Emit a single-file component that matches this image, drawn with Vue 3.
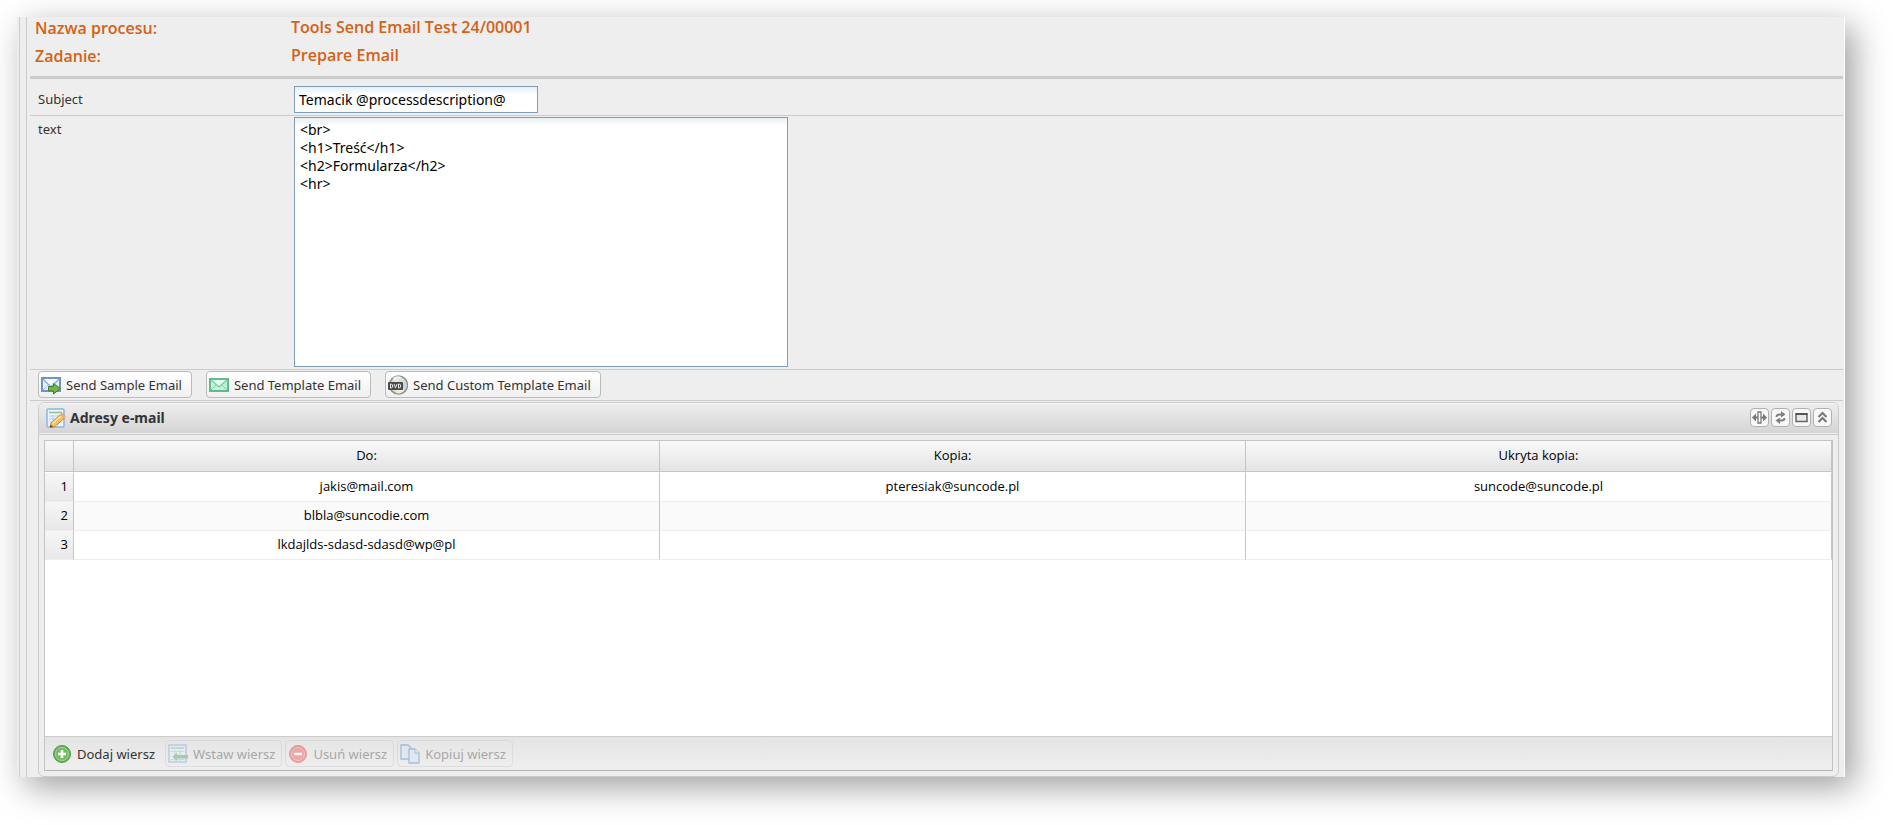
<script setup>
import { ref } from 'vue'

const subject = ref('Temacik @processdescription@')
const body = ref('<br>\n<h1>Treść</h1>\n<h2>Formularza</h2>\n<hr>')

const columns = ['Do:', 'Kopia:', 'Ukryta kopia:']
const rows = [
  ['jakis@mail.com', 'pteresiak@suncode.pl', 'suncode@suncode.pl'],
  ['blbla@suncodie.com', '', ''],
  ['lkdajlds-sdasd-sdasd@wp@pl', '', ''],
]
</script>

<template>
  <div class="page">
    <main class="window">
      <div class="content">
        <dl class="process">
          <dt>Nazwa procesu:</dt>
          <dd>Tools Send Email Test 24/00001</dd>
          <dt>Zadanie:</dt>
          <dd>Prepare Email</dd>
        </dl>

        <div class="form-row">
          <label for="subject">Subject</label>
          <input id="subject" v-model="subject" type="text" />
        </div>
        <div class="form-row">
          <label for="body">text</label>
          <textarea id="body" v-model="body" spellcheck="false"></textarea>
        </div>

        <div class="actions">
          <button type="button" class="btn">
            <svg viewBox="0 0 20 20" aria-hidden="true">
              <rect x="1" y="3" width="18" height="13" fill="#e3effb" stroke="#6d93cd" stroke-width="2" />
              <path d="M2 15l6-6M18 15l-6-6" stroke="#a9c5e8" />
              <path d="M2 4l8 8 8-8" fill="#f8fcff" stroke="#88abd9" stroke-width="1.3" />
              <path d="M7.500 11.500h5v-3l7 5-7 5.500v-3h-5z" fill="#74b44c" stroke="#39812d" />
            </svg>
            Send Sample Email
          </button>
          <button type="button" class="btn">
            <svg viewBox="0 0 20 20" aria-hidden="true">
              <rect x="1" y="4" width="18" height="12" fill="#c3f1da" stroke="#5dbb8e" stroke-width="2" />
              <path d="M2 15l6-6M18 15l-6-6" stroke="#7ed0a6" />
              <path d="M2 5l8 7 8-7" fill="#e2faee" stroke="#7acba2" stroke-width="1.300" />
            </svg>
            Send Template Email
          </button>
          <button type="button" class="btn">
            <svg viewBox="0 0 20 20" aria-hidden="true">
              <circle cx="10.500" cy="10" r="9" fill="#dcded9" stroke="#8d908f" stroke-width="1.500" />
              <path d="M10 10L5 3a8 8 0 0 1 8-1z" fill="#f7f8f5" />
              <path d="M10 10l8-3a8 8 0 0 1-1 8z" fill="#c5d6e8" />
              <path d="M10 10l6 6a8 8 0 0 1-8 2z" fill="#f2efd4" />
              <circle cx="10" cy="5" r="1.500" fill="#fff" stroke="#b4b4b4" stroke-width=".6" />
              <rect x="0" y="7" width="15" height="8" rx="1" fill="#464b4c" />
              <path d="M2.500 9v4h1l1-1v-2l-1-1zM6 9l1.500 4L9 9M10.500 9v4h1l1-1v-2l-1-1z" fill="none" stroke="#e8e8e8" />
            </svg>
            Send Custom Template Email
          </button>
        </div>

        <section class="panel">
          <header class="panel-head">
            <svg class="panel-icon" viewBox="0 0 20 20" aria-hidden="true">
              <rect x="1" y="1" width="17" height="18" rx="1" fill="#eaf4fd" stroke="#8fb4df" stroke-width="1.500" />
              <path d="M3 4.500h13" stroke="#8fc486" stroke-width="1.500" />
              <path d="M3 8h13M3 11h13M3 14h13M7 7v10M12 7v10" stroke="#b5d0ee" />
              <path d="M5 15L14.500 6.500q2-1.500 3.500 0t.5 3.500L9 18.500l-4.500 1z" fill="#f6c25c" stroke="#cf8a33" />
              <path d="M6.500 15.500L15 8" stroke="#fde7a5" stroke-width="1.500" />
              <path d="M14 6.500l1.500-1q2-.5 3 1t.5 3l-1 1z" fill="#eba77d" />
              <path d="M4.500 16.500l2.500 2.500-3 .5z" fill="#5b4632" />
            </svg>
            <h2>Adresy e-mail</h2>
            <div class="tools">
              <button type="button" aria-label="Dopasuj kolumny">
                <svg viewBox="0 0 17 17" aria-hidden="true">
                  <path d="M7 3h3v11H7z" fill="#fff" stroke="#777" stroke-width="1.300" />
                  <path d="M1 8.500L5 4.500v3h2v2H5v3zM16 8.500L12 4.500v3h-2v2h2v3z" fill="#777" />
                </svg>
              </button>
              <button type="button" aria-label="Odśwież">
                <svg viewBox="0 0 17 17" aria-hidden="true">
                  <path d="M4.500 8q0-2.500 3-2.500H10M12.500 9q0 2.500-3 2.500H7" fill="none" stroke="#808080" stroke-width="2" />
                  <path d="M9 2l4.500 3.500L9 8.500zM8 8.500l-4.500 3L8 15z" fill="#808080" />
                </svg>
              </button>
              <button type="button" aria-label="Maksymalizuj">
                <svg viewBox="0 0 17 17" aria-hidden="true">
                  <rect x="3" y="5" width="11" height="7.500" fill="#e8e8e8" stroke="#666" stroke-width="1.500" />
                  <path d="M2.500 5h12" stroke="#555" stroke-width="2" />
                </svg>
              </button>
              <button type="button" aria-label="Zwiń">
                <svg viewBox="0 0 17 17" aria-hidden="true">
                  <path d="M4.500 8L8.500 4l4 4M4.500 13l4-4 4 4" fill="none" stroke="#777" stroke-width="2" />
                </svg>
              </button>
            </div>
          </header>

          <div class="grid">
            <div class="grid-body">
              <table>
                <thead>
                  <tr>
                    <th class="num"></th>
                    <th v-for="c in columns" :key="c" scope="col">{{ c }}</th>
                  </tr>
                </thead>
                <tbody>
                  <tr v-for="(row, i) in rows" :key="i">
                    <td class="num">{{ i + 1 }}</td>
                    <td v-for="(cell, j) in row" :key="j">{{ cell }}</td>
                  </tr>
                </tbody>
              </table>
            </div>
            <footer class="toolbar">
              <button type="button" class="btn flat">
                <svg viewBox="0 0 20 20" aria-hidden="true">
                  <circle cx="10" cy="10" r="8.500" fill="#67b35a" stroke="#4f9a49" />
                  <circle cx="10" cy="10" r="6.500" fill="#72bd62" stroke="#a2d695" />
                  <path d="M10 6v8M6 10h8" stroke="#fff" stroke-width="2.600" />
                </svg>
                Dodaj wiersz
              </button>
              <button type="button" class="btn flat" disabled>
                <svg viewBox="0 0 20 20" aria-hidden="true">
                  <rect x="1" y="1" width="17" height="17" fill="#e4f0fb" stroke="#7fa9de" stroke-width="1.500" />
                  <path d="M3 4h13" stroke="#7fbd73" stroke-width="1.500" />
                  <path d="M3 7.500h13M3 15.500h13M7 6v11M12 6v11" stroke="#a4c3e8" />
                  <path d="M4.500 12.500L9 8.500v2.500h11v3.500H9V17z" fill="#58a35a" />
                </svg>
                Wstaw wiersz
              </button>
              <button type="button" class="btn flat" disabled>
                <svg viewBox="0 0 20 20" aria-hidden="true">
                  <circle cx="10" cy="10" r="8.500" fill="#e8443a" stroke="#d4423a" />
                  <circle cx="10" cy="10" r="6.500" fill="#ea5a50" stroke="#f39b94" />
                  <path d="M6 10h8" stroke="#fff" stroke-width="2.600" />
                </svg>
                Usuń wiersz
              </button>
              <button type="button" class="btn flat" disabled>
                <svg viewBox="0 0 20 20" aria-hidden="true">
                  <path d="M1 1h7l4 4v10H1z" fill="#d3e5fa" stroke="#5486c9" stroke-width="1.300" />
                  <path d="M9 5h6l4 4v10H9z" fill="#d3e5fa" stroke="#5486c9" stroke-width="1.300" />
                  <path d="M15 5v4h4" fill="#fff" stroke="#5486c9" />
                </svg>
                Kopiuj wiersz
              </button>
            </footer>
          </div>
        </section>
      </div>
    </main>
  </div>
</template>

<style>
body {
  margin: 0;
  background: #fff;
}
</style>

<style scoped>
.page {
  box-sizing: border-box;
  display: flex;
  min-height: 100vh;
  padding: 17px 48px 48px 17px;
  font-family: "Noto Sans", "Open Sans", sans-serif;
  font-size: 14px;
  color: #333;
}

.window {
  flex: 1;
  display: flex;
  min-width: 0;
  padding-left: 2px;
  background: #eee;
  border-right: 1px solid #fff;
  box-shadow: 9px 10px 32px rgba(0, 0, 0, 0.38);
}

.content {
  flex: 1;
  display: flex;
  flex-direction: column;
  min-width: 0;
  padding: 0 1px 0 10px;
  border-left: 1px solid #ccc;
  background: linear-gradient(#ccc, #ccc) 6px 0 / 1px 100% no-repeat;
}

.process {
  display: grid;
  grid-template-columns: 256px 1fr;
  grid-auto-rows: 28px;
  align-items: start;
  margin: 0;
  padding: 0 0 3px 5px;
  border-bottom: 3px solid #ccc;
  font: 600 16px/22px "Open Sans", sans-serif;
  color: #d56114;
}

.process dt,
.process dd {
  margin: 0;
}

.process dd {
  line-height: 20px;
}

.form-row {
  display: grid;
  grid-template-columns: 256px 1fr;
  align-items: start;
  padding-left: 8px;
  padding-bottom: 2px;
  border-bottom: 1px solid #ccc;
}

.form-row label {
  padding-top: 4px;
  font-size: 13px;
  line-height: 18px;
}

.process + .form-row {
  padding-top: 7px;
}

.form-row input,
.form-row textarea {
  box-sizing: border-box;
  margin: 0;
  padding: 3px 5px;
  border: 1px solid #7f9db9;
  border-radius: 0;
  background: linear-gradient(#e9eff2, #fff 8px);
  font: 14px/18px "Noto Sans", "Open Sans", sans-serif;
  color: #000;
}

.form-row input {
  width: 244px;
  height: 27px;
  padding: 0 4px;
}

.form-row textarea {
  display: block;
  width: 494px;
  height: 250px;
  margin-top: 1px;
  resize: none;
}

.actions {
  display: flex;
  gap: 14px;
  padding: 1px 0 2px 8px;
  border-bottom: 1px solid #ccc;
}

.btn {
  box-sizing: border-box;
  display: flex;
  align-items: center;
  gap: 5px;
  height: 27px;
  padding: 0 9px 0 2px;
  border: 1px solid #bbb;
  border-radius: 4px;
  background: linear-gradient(#fff, #f0f0f0);
  font: 13px/18px "Noto Sans", "Open Sans", sans-serif;
  color: #333;
  white-space: nowrap;
}

.btn svg {
  width: 20px;
  height: 20px;
}

.btn.flat {
  padding-right: 6px;
  border-color: transparent;
  background: none;
}

.btn.flat:disabled {
  border-color: #ccc;
  opacity: 0.45;
  color: #555;
}

.panel {
  flex: 1;
  display: flex;
  flex-direction: column;
  margin: 1px 4px 0 8px;
  border: 1px solid #ccc;
  border-radius: 6px;
  overflow: hidden;
}

.panel-head {
  box-sizing: border-box;
  display: flex;
  align-items: center;
  height: 32px;
  padding: 0 6px 2px 7px;
  border-bottom: 1px solid #ccc;
  background: linear-gradient(#eee, #d4d4d4);
  box-shadow: inset 0 1px #f6f6f6, inset 0 -1px #eee;
}

.panel-icon {
  width: 20px;
  height: 20px;
  margin-right: 4px;
}

.panel-head h2 {
  flex: 1;
  margin: 0;
  font-size: 14px;
  line-height: 18px;
  color: #333;
}

.tools {
  display: flex;
  gap: 2px;
}

.tools button {
  box-sizing: border-box;
  display: flex;
  width: 19px;
  height: 19px;
  padding: 0;
  border: 1px solid #b0b0b0;
  border-radius: 4px;
  background: #f8f8f8;
}

.tools svg {
  width: 17px;
  height: 17px;
}

.grid {
  flex: 1;
  display: flex;
  flex-direction: column;
  margin: 5px;
  border: 1px solid #c4c4c4;
  border-bottom-color: #b5b1b1;
}

.grid-body {
  flex: 1;
  background: #fff;
}

table {
  width: 100%;
  table-layout: fixed;
  border-collapse: separate;
  border-spacing: 0;
  font-family: "Open Sans", sans-serif;
  font-size: 13px;
  line-height: 18px;
  color: #000;
}

th,
td {
  box-sizing: border-box;
  padding: 0 5px 2px;
  text-align: center;
  font-weight: 400;
}

th {
  height: 31px;
  border-right: 1px solid #c5c5c5;
  border-bottom: 1px solid #c5c5c5;
  background: linear-gradient(#f9f9f9, #e3e4e6);
}

td {
  height: 29px;
  border-right: 1px solid #c5c5c5;
  border-bottom: 1px solid #ededed;
}

tbody tr:first-child td {
  height: 30px;
  border-top: 1px solid #fff;
}

tbody tr:nth-child(even) td {
  background: #fafafa;
}

th.num,
td.num {
  width: 29px;
}

tbody tr td.num {
  text-align: right;
  background: linear-gradient(#f6f6f6, #e8e8e8);
}

.toolbar {
  display: flex;
  gap: 3px;
  padding: 3px 4px;
  border-top: 1px solid #ccc;
  background: linear-gradient(#e4e4e4, #efefef);
}
</style>
